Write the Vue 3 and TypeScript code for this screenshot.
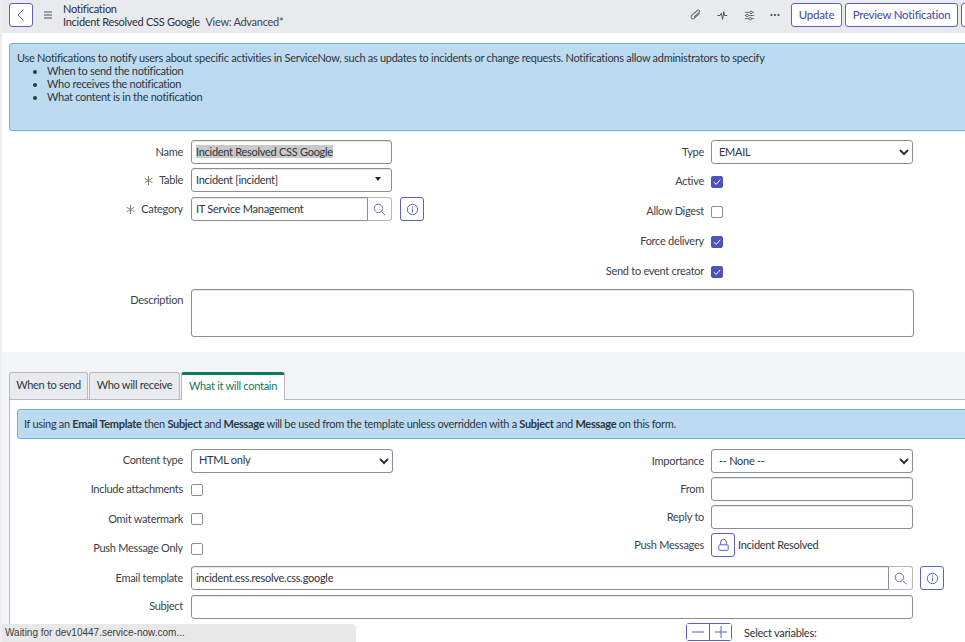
<template>
  <div class="page">
    <header class="topbar">
      <button class="btn icon-btn" aria-label="Back">
        <svg width="12" height="14" viewBox="0 0 12 14"><path d="M8.5 1.5 3 7l5.5 5.5" fill="none" stroke="#5b5fc7" stroke-width="1" /></svg>
      </button>
      <svg class="menu-icon" width="10" height="8" viewBox="0 0 10 8"><path d="M1 1h8M1 4h8M1 7h8" stroke="#4a4f5c" stroke-width="1.2" /></svg>
      <div class="title">
        <div>Notification</div>
        <div>Incident Resolved CSS Google <span class="view">View: Advanced*</span></div>
      </div>
      <div class="tools">
        <svg width="13" height="14" viewBox="0 0 14 16"><path d="M11.5 5.5 6 12a2.2 2.2 0 0 1-3.3-2.9l5.8-6.8a1.5 1.5 0 0 1 2.3 1.9L5.6 10.6" fill="none" stroke="#6b6f7a" stroke-width="1.2" transform="rotate(8 7 8)" /></svg>
        <svg width="11" height="11" viewBox="0 0 14 14"><path d="M0.5 7H4l1.5-3 1.6 8 1.5-10 1 5h3.4" fill="none" stroke="#4a4f5c" stroke-width="1.2" /></svg>
        <svg width="11" height="11" viewBox="0 0 14 14"><path d="M1 3h12M1 7h12M1 11h12" stroke="#6b6f7a" stroke-width="1.2" /><circle cx="9" cy="3" r="1.6" fill="#e9eaed" stroke="#4a4f5c" /><circle cx="4" cy="7" r="1.6" fill="#e9eaed" stroke="#4a4f5c" /><circle cx="8" cy="11" r="1.6" fill="#e9eaed" stroke="#4a4f5c" /></svg>
        <svg width="10" height="4" viewBox="0 0 10 4"><circle cx="1.5" cy="2" r="1.1" fill="#3f4450" /><circle cx="5" cy="2" r="1.1" fill="#3f4450" /><circle cx="8.5" cy="2" r="1.1" fill="#3f4450" /></svg>
      </div>
      <button class="btn text-btn update">Update</button>
      <button class="btn text-btn preview">Preview Notification</button>
      <button class="btn text-btn cut"></button>
    </header>

    <div class="top-form">
      <div class="info intro">
        <div>Use Notifications to notify users about specific activities in ServiceNow, such as updates to incidents or change requests. Notifications allow administrators to specify</div>
        <ul>
          <li>When to send the notification</li>
          <li>Who receives the notification</li>
          <li>What content is in the notification</li>
        </ul>
      </div>

      <div class="columns">
        <div class="col-left">
          <div class="row">
            <label class="label">Name</label>
            <div class="input w-name"><span class="selected">Incident Resolved CSS Google</span></div>
          </div>
          <div class="row row-table">
            <label class="label"><svg class="req" width="9" height="9" viewBox="0 0 9 9"><path d="M4.5 0v9M.6 2.2l7.8 4.6M.6 6.8l7.8-4.6" stroke="#8b7d6b" stroke-width="1" /></svg>Table</label>
            <div class="input w-name between">Incident [incident]<span class="caret"></span></div>
          </div>
          <div class="row row-cat">
            <label class="label"><svg class="req" width="9" height="9" viewBox="0 0 9 9"><path d="M4.5 0v9M.6 2.2l7.8 4.6M.6 6.8l7.8-4.6" stroke="#8b7d6b" stroke-width="1" /></svg>Category</label>
            <div class="group w-name">
              <div class="input grow">IT Service Management</div>
              <button class="addon" aria-label="Search">
                <svg width="13" height="13" viewBox="0 0 13 13"><circle cx="5.4" cy="5.4" r="4.2" fill="none" stroke="#6d70b8" /><path d="m8.5 8.5 3.8 3.8" stroke="#6d70b8" /></svg>
              </button>
            </div>
            <button class="btn icon-btn info-btn" aria-label="Details">
              <svg width="13" height="13" viewBox="0 0 13 13"><circle cx="6.5" cy="6.5" r="5.2" fill="none" stroke="#5b5fc7" /><path d="M6.5 5.6v3.8M6.5 3.4v1.2" stroke="#5b5fc7" /></svg>
            </button>
          </div>
        </div>
        <div class="col-right">
          <div class="row">
            <label class="label label-r">Type</label>
            <select class="select w-type"><option>EMAIL</option></select>
          </div>
          <div v-for="c in topChecks" :key="c.label" class="row check-row">
            <label class="label label-r">{{ c.label }}</label>
            <span class="check" :class="{ on: c.on }">
              <svg v-if="c.on" width="10" height="10" viewBox="0 0 10 10"><path d="m2 5.2 2.2 2.2L8.2 2.8" fill="none" stroke="#fff" stroke-width="1" /></svg>
            </span>
          </div>
        </div>
      </div>

      <div class="row desc-row">
        <label class="label desc-label">Description</label>
        <div class="input desc"></div>
      </div>
    </div>

    <section class="tab-area">
      <div class="tabs">
        <div class="tab tab-1">When to send</div>
        <div class="tab tab-2">Who will receive</div>
        <div class="tab tab-3 active">What it will contain</div>
      </div>
      <div class="panel">
        <div class="info note">If using an <b>Email Template</b> then <b>Subject</b> and <b>Message</b> will be used from the template unless overridden with a <b>Subject</b> and <b>Message</b> on this form.</div>

        <div class="columns panel-cols">
          <div class="col-left">
            <div class="row first-row">
              <label class="label">Content type</label>
              <select class="select w-content"><option>HTML only</option></select>
            </div>
            <div v-for="c in panelChecks" :key="c" class="row check-row-2">
              <label class="label">{{ c }}</label>
              <span class="check"></span>
            </div>
          </div>
          <div class="col-right col-right-2">
            <div class="row">
              <label class="label label-r">Importance</label>
              <select class="select w-type"><option>-- None --</option></select>
            </div>
            <div class="row gap4">
              <label class="label label-r">From</label>
              <div class="input w-type"></div>
            </div>
            <div class="row gap4">
              <label class="label label-r">Reply to</label>
              <div class="input w-type"></div>
            </div>
            <div class="row gap4">
              <label class="label label-r">Push Messages</label>
              <button class="btn icon-btn" aria-label="Unlock">
                <svg width="13" height="14" viewBox="0 0 13 14"><path d="M3.6 6.5V4.2a2.9 2.9 0 0 1 5.8 0v2.3" fill="none" stroke="#5b5fc7" /><rect x="1.8" y="6.8" width="9.4" height="5.6" rx="1" fill="none" stroke="#5b5fc7" /></svg>
              </button>
              <span class="push-value">Incident Resolved</span>
            </div>
          </div>
        </div>

        <div class="row template-row">
          <label class="label">Email template</label>
          <div class="group w-template">
            <div class="input grow">incident.ess.resolve.css.google</div>
            <button class="addon" aria-label="Search">
              <svg width="13" height="13" viewBox="0 0 13 13"><circle cx="5.4" cy="5.4" r="4.2" fill="none" stroke="#6d70b8" /><path d="m8.5 8.5 3.8 3.8" stroke="#6d70b8" /></svg>
            </button>
          </div>
          <button class="btn icon-btn info-btn" aria-label="Details">
            <svg width="13" height="13" viewBox="0 0 13 13"><circle cx="6.5" cy="6.5" r="5.2" fill="none" stroke="#5b5fc7" /><path d="M6.5 5.6v3.8M6.5 3.4v1.2" stroke="#5b5fc7" /></svg>
          </button>
        </div>
        <div class="row subject-row">
          <label class="label">Subject</label>
          <div class="input w-template"></div>
        </div>
        <div class="vars">
          <div class="stepper">
            <button aria-label="Remove"><svg width="12" height="12" viewBox="0 0 12 12"><path d="M0 6h12" stroke="#5b5fc7" /></svg></button>
            <button aria-label="Add"><svg width="12" height="12" viewBox="0 0 12 12"><path d="M0 6h12M6 0v12" stroke="#5b5fc7" /></svg></button>
          </div>
          <span class="vars-label">Select variables:</span>
        </div>
      </div>
    </section>

    <div class="status">Waiting for dev10447.service-now.com...</div>
  </div>
</template>

<script setup lang="ts">
const topChecks = [
  { label: 'Active', on: true },
  { label: 'Allow Digest', on: false },
  { label: 'Force delivery', on: true },
  { label: 'Send to event creator', on: true },
]

const panelChecks = ['Include attachments', 'Omit watermark', 'Push Message Only']
</script>

<style>
html,
body {
  height: 100%;
  overflow: hidden;
}
</style>

<style scoped>
.page {
  position: relative;
  width: 965px;
  height: 642px;
  overflow: hidden;
  box-sizing: border-box;
  border-left: 2px solid #eceef1;
  background: #fff;
  color: #2e3440;
  font-family: Lato, "Liberation Sans", sans-serif;
  font-size: 11px;
  letter-spacing: -0.28px;
  line-height: 13px;
}

.topbar {
  display: flex;
  align-items: center;
  height: 33px;
  margin-left: -2px;
  padding: 0 0 3px 9px;
  box-sizing: border-box;
  background: #e9eaed;
  white-space: nowrap;
}

.btn {
  box-sizing: border-box;
  height: 24px;
  padding: 0;
  border: 1px solid #5b5fc7;
  border-radius: 3px;
  background: #fff;
  color: #4f52b2;
  font: inherit;
  letter-spacing: inherit;
  flex-shrink: 0;
}

.icon-btn {
  display: flex;
  align-items: center;
  justify-content: center;
  width: 24px;
}

.menu-icon {
  flex-shrink: 0;
  margin-left: 10px;
}

.title {
  flex-shrink: 0;
  width: 300px;
  margin-left: 10px;
  color: #293040;
}

.view {
  margin-left: 3px;
  color: #3f4450;
}

.tools {
  display: flex;
  flex-shrink: 0;
  align-items: center;
  justify-content: space-between;
  width: 91px;
  margin-left: 326px;
}

.text-btn {
  padding-bottom: 2px;
  font-size: 11.5px;
  font-weight: 500;
}

.update {
  width: 51px;
  margin-left: 11px;
}

.preview {
  width: 113px;
  margin-left: 3px;
}

.cut {
  width: 30px;
  margin-left: 3px;
}

.info {
  box-sizing: border-box;
  border: 1px solid #6cb1e3;
  border-radius: 3px;
  background: #bcdbf1;
}

.intro {
  height: 88px;
  margin: 10px -4px 0 7px;
  padding: 7px;
}

.intro ul {
  margin: 0;
  padding-left: 30px;
}

.columns {
  display: flex;
}

.top-form .columns {
  height: 149px;
  margin-top: 9px;
}

.col-left {
  flex-shrink: 0;
  width: 514px;
}

.row {
  display: flex;
  align-items: center;
  height: 24px;
}

.row-table {
  margin-top: 4px;
}

.row-cat {
  margin-top: 5px;
}

.label {
  box-sizing: border-box;
  flex-shrink: 0;
  width: 181px;
  padding-bottom: 2px;
  text-align: right;
  color: #3a3f4b;
}

.label-r {
  width: 195px;
  padding-right: 7px;
}

.req {
  margin-right: 6px;
  vertical-align: -1px;
}

.input {
  display: flex;
  align-items: center;
  box-sizing: border-box;
  height: 24px;
  padding: 0 4px 2px;
  border: 1px solid #8a8e97;
  border-radius: 3px;
  background: #fff;
  box-shadow: inset 0 1px 1px rgba(0, 0, 0, 0.1);
  color: #2e3440;
}

.w-name {
  width: 201px;
}

.w-type,
.w-content {
  width: 202px;
}

.w-template {
  width: 722px;
}

.between {
  justify-content: space-between;
}

.selected {
  background: #c9c9c9;
}

.caret {
  width: 0;
  height: 0;
  margin-right: 6px;
  border-left: 3.5px solid transparent;
  border-right: 3.5px solid transparent;
  border-top: 4px solid #20242c;
}

.group {
  display: flex;
  height: 24px;
}

.grow {
  flex: 1;
  border-radius: 3px 0 0 3px;
}

.addon {
  display: flex;
  align-items: center;
  justify-content: center;
  box-sizing: border-box;
  width: 24px;
  height: 24px;
  padding: 0;
  border: 1px solid #b4b7be;
  border-left: 0;
  border-radius: 0 3px 3px 0;
  background: #fff;
}

.info-btn {
  margin-left: 8px;
}

.template-row .info-btn {
  margin-left: 7px;
}

.select {
  box-sizing: border-box;
  height: 24px;
  padding: 0 3px 2px;
  border: 1px solid #8a8e97;
  border-radius: 3px;
  background: #fff;
  color: #2e3440;
  font: inherit;
  letter-spacing: inherit;
}

.first-row .select {
  padding-bottom: 4px;
}

.first-row .label {
  padding-bottom: 4px;
}

.check-row {
  height: 30px;
}

.check-row .label {
  padding-bottom: 4px;
}

.col-right > .check-row:nth-child(2) {
  margin-top: 3px;
}

.check {
  display: flex;
  align-items: center;
  justify-content: center;
  box-sizing: border-box;
  width: 12px;
  height: 12px;
  border: 1px solid #8a8e97;
  border-radius: 2px;
  background: #fff;
}

.check.on {
  border-color: #4f52bd;
  background: #4f52bd;
}

.check-row-2 .check {
  margin-left: 8px;
}

.desc-row {
  align-items: flex-start;
  height: 48px;
}

.desc-label {
  padding-top: 4px;
}

.desc {
  width: 723px;
  height: 48px;
}

.col-left .input,
.col-left .select,
.col-left .group,
.template-row .group,
.subject-row .input,
.desc-row .input {
  margin-left: 8px;
}

.col-left .group .input,
.template-row .group .input {
  margin-left: 0;
}

.tab-area {
  height: 290px;
  margin-top: 15px;
  margin-left: -2px;
  padding-top: 20px;
  border-left: 2px solid #eceef1;
  background: #f4f5f7;
}

.tabs {
  display: flex;
  gap: 1px;
  height: 27px;
  margin-left: 7px;
  white-space: nowrap;
}

.tab {
  display: flex;
  align-items: center;
  justify-content: center;
  box-sizing: border-box;
  padding-bottom: 4px;
  border: 1px solid #b6b9c0;
  border-bottom: 0;
  border-radius: 3px 3px 0 0;
  background: #e9eaed;
}

.tab-1 {
  width: 79px;
}

.tab-2 {
  width: 91px;
}

.tab-3 {
  width: 104px;
}

.tab.active {
  position: relative;
  z-index: 1;
  height: 28px;
  padding-bottom: 5px;
  border-top: 3px solid #0b7a5b;
  background: #fff;
  color: #13775f;
}

.panel {
  height: 260px;
  margin: 0 -4px 0 7px;
  padding: 9px 0 0 7px;
  border-left: 1px solid #b6b9c0;
  border-top: 1px solid #b6b9c0;
  background: #fff;
}

.note {
  height: 30px;
  padding-left: 6px;
  letter-spacing: -0.31px;
  line-height: 28px;
  white-space: nowrap;
}

.note b {
  font-weight: 700;
}

.panel-cols {
  height: 117px;
  margin-top: 10px;
  margin-left: -15px;
}

.check-row-2 {
  height: 29.5px;
}

.col-left > .check-row-2:nth-child(2) {
  margin-top: 2px;
}

.col-right-2 .gap4 {
  margin-top: 4px;
}

.push-value {
  margin-left: 3px;
  padding-bottom: 2px;
}

.template-row {
  margin-left: -15px;
}

.subject-row {
  margin: 5px 0 0 -15px;
}

.subject-row .label {
  padding-bottom: 4px;
}

.vars {
  display: flex;
  align-items: center;
  height: 18px;
  margin: 4px 0 0 669px;
}

.stepper {
  display: flex;
  box-sizing: border-box;
  height: 18px;
  border: 1px solid #5b5fc7;
  border-radius: 3px;
}

.stepper button {
  display: flex;
  align-items: center;
  justify-content: center;
  width: 22px;
  padding: 0;
  border: 0;
  background: #fff;
}

.stepper button + button {
  border-left: 1px solid #5b5fc7;
}

.vars-label {
  margin-left: 12px;
}

.status {
  position: absolute;
  left: -2px;
  bottom: 0;
  width: 351px;
  height: 18px;
  padding-left: 5px;
  border-radius: 0 4px 0 0;
  background: #e8e8e8;
  color: #3d3d3d;
  font-family: "Liberation Sans", sans-serif;
  font-size: 10px;
  letter-spacing: 0;
  line-height: 18px;
}
</style>
